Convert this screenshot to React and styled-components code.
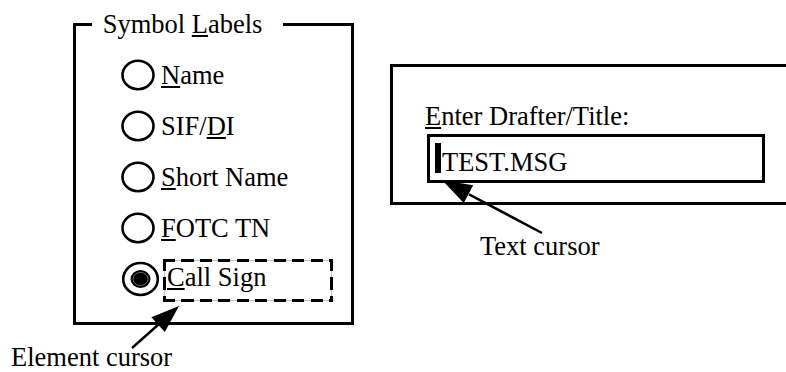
import React from "react";
import styled, { createGlobalStyle } from "styled-components";

const GlobalStyle = createGlobalStyle`
  html, body { margin: 0; padding: 0; background: #fff; }
  body {
    font-family: "Liberation Serif", "Times New Roman", serif;
    color: #000;
  }
`;

const Page = styled.div`
  position: relative;
  display: flex;
  align-items: flex-start;
  width: 786px;
  height: 372px;
  box-sizing: border-box;
  padding: 9px 0 0 11px;
  overflow: hidden;
  font-family: "Liberation Serif", "Times New Roman", serif;
  font-size: 26.5px;
  line-height: 30px;
  color: #000;
`;

const LeftColumn = styled.div`
  display: flex;
  flex-direction: column;
  align-items: flex-start;
`;

const GroupBox = styled.fieldset`
  margin: 0 0 17.5px 62px;
  padding: 0;
  min-inline-size: 0;
  width: 281px;
  box-sizing: border-box;
  border: 3px solid #000;
  font: inherit;
`;

const GroupTitle = styled.legend`
  margin-left: 16px;
  padding: 0 21px 0 10.7px;
  line-height: 30px;
`;

const Mnemonic = styled.u`
  text-decoration-thickness: 1.5px;
  text-underline-offset: 2px;
`;

const RadioList = styled.div`
  display: flex;
  flex-direction: column;
  padding: 10px 0 17.5px 45px;
`;

const RadioRow = styled.div`
  display: flex;
  align-items: center;
  height: 51px;
  gap: 2px;
`;

const RadioSvg = styled.svg`
  flex: none;
  overflow: visible;
  display: block;
`;

const Label = styled.span`
  white-space: nowrap;
`;

const dash = (dir) =>
  `repeating-linear-gradient(${dir}, #000 0 12px, transparent 12px 18.5px)`;

const FocusBox = styled.span`
  display: block;
  box-sizing: border-box;
  width: 170px;
  height: 43px;
  margin: 4px 0 0 2px;
  padding: 3px 0 0 4px;
  white-space: nowrap;
  background:
    ${dash("to right")} left top / 100% 3px no-repeat,
    ${dash("to right")} left bottom / 100% 3px no-repeat,
    ${dash("to bottom")} left top / 3px 100% no-repeat,
    ${dash("to bottom")} right top / 3px 100% no-repeat,
    linear-gradient(#c6c6c6, #c6c6c6) left 1px top 1px / calc(100% - 2px) 1px no-repeat,
    linear-gradient(#c6c6c6, #c6c6c6) left 1px bottom 1px / calc(100% - 2px) 1px no-repeat,
    linear-gradient(#c6c6c6, #c6c6c6) left 1px top 1px / 1px calc(100% - 2px) no-repeat,
    linear-gradient(#c6c6c6, #c6c6c6) right 1px top 1px / 1px calc(100% - 2px) no-repeat;
`;

const Caption = styled.div`
  line-height: 30px;
  white-space: nowrap;
  padding-left: ${(p) => p.$indent || 0}px;
  margin-top: ${(p) => p.$gap || 0}px;
`;

const RightColumn = styled.div`
  flex: 1;
  margin: 55px 0 0 36px;
  display: flex;
  flex-direction: column;
`;

const Panel = styled.div`
  border: 3px solid #000;
  border-right: none;
  padding: 33.5px 0 19.2px 32px;
`;

const PromptLabel = styled.div`
  line-height: 30px;
  white-space: nowrap;
`;

const TextField = styled.div`
  display: flex;
  align-items: flex-start;
  box-sizing: border-box;
  width: 338px;
  height: 49.5px;
  margin: 3px 0 0 2px;
  border: 3px solid #000;
  padding: 6px 0 0 5px;
`;

const TextCursor = styled.span`
  flex: none;
  width: 6px;
  height: 30px;
  background: #000;
`;

const FieldValue = styled.span`
  margin: 4.5px 0 0 1px;
  line-height: 30px;
  white-space: nowrap;
`;

const Annotations = styled.svg`
  position: absolute;
  left: 0;
  top: 0;
  pointer-events: none;
`;

function RadioIcon({ checked }) {
  return (
    <RadioSvg width="38" height="36" viewBox="0 0 38 36">
      {checked ? (
        <>
          <ellipse cx="19.5" cy="18" rx="17.3" ry="16" fill="none" stroke="#000" strokeWidth="2.6" />
          <ellipse cx="19.5" cy="18" rx="10" ry="9" fill="#000" />
          <ellipse cx="19.5" cy="18" rx="7.5" ry="6.6" fill="none" stroke="#6a6a6a" strokeWidth="1" />
        </>
      ) : (
        <ellipse cx="17" cy="18" rx="15.5" ry="14.2" fill="none" stroke="#000" strokeWidth="2.6" />
      )}
    </RadioSvg>
  );
}

const options = [
  { pre: "", key: "N", post: "ame" },
  { pre: "SIF/", key: "D", post: "I" },
  { pre: "", key: "S", post: "hort Name" },
  { pre: "", key: "F", post: "OTC TN" },
  { pre: "", key: "C", post: "all Sign", checked: true },
];

export default function App() {
  return (
    <>
      <GlobalStyle />
      <Page>
        <LeftColumn>
          <GroupBox>
            <GroupTitle>
              Symbol <Mnemonic>L</Mnemonic>abels
            </GroupTitle>
            <RadioList>
              {options.map((o) => {
                const text = (
                  <>
                    {o.pre}
                    <Mnemonic>{o.key}</Mnemonic>
                    {o.post}
                  </>
                );
                return (
                  <RadioRow key={o.key}>
                    <RadioIcon checked={o.checked} />
                    {o.checked ? <FocusBox>{text}</FocusBox> : <Label>{text}</Label>}
                  </RadioRow>
                );
              })}
            </RadioList>
          </GroupBox>
          <Caption>Element cursor</Caption>
        </LeftColumn>
        <RightColumn>
          <Panel>
            <PromptLabel>
              <Mnemonic>E</Mnemonic>nter Drafter/Title:
            </PromptLabel>
            <TextField>
              <TextCursor />
              <FieldValue>TEST.MSG</FieldValue>
            </TextField>
          </Panel>
          <Caption $indent={90} $gap={26.3}>
            Text cursor
          </Caption>
        </RightColumn>
        <Annotations width="786" height="372" viewBox="0 0 786 372">
          <line x1="132" y1="348" x2="159" y2="324" stroke="#000" strokeWidth="2.5" />
          <polygon points="179,306 164.8,332.1 151.4,317.2" fill="#000" />
          <line x1="542" y1="233" x2="469" y2="194.3" stroke="#000" strokeWidth="2.5" />
          <polygon points="442,180 463.8,202.9 473.2,185.2" fill="#000" />
        </Annotations>
      </Page>
    </>
  );
}
